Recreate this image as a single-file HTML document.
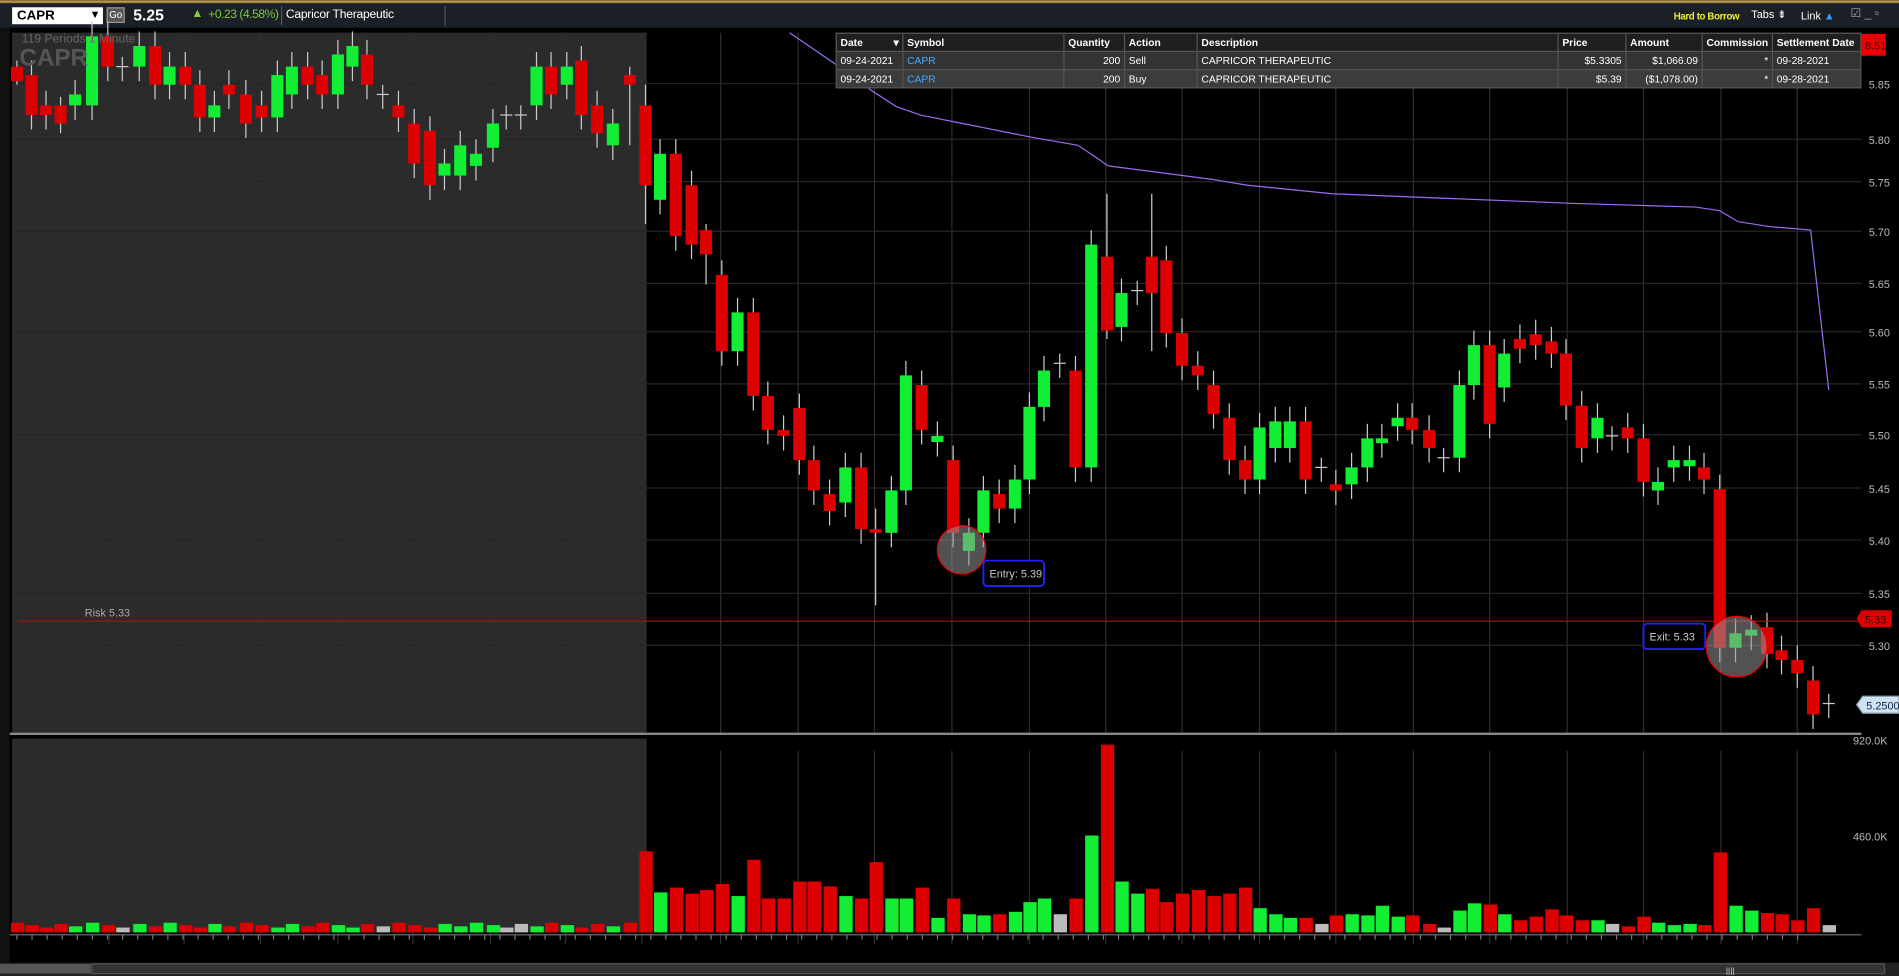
<!DOCTYPE html>
<html><head><meta charset="utf-8"><style>
html,body{margin:0;padding:0;background:#000;overflow:hidden;width:1899px;height:976px}
#w{position:absolute;left:0;top:0;width:1568px;height:806px;transform:scale(1.2111,1.2109);transform-origin:0 0;font-family:"Liberation Sans",sans-serif;color:#ddd}
.t{position:absolute;white-space:nowrap}
table{border-collapse:collapse;font-size:8.5px;color:#fff}
td{border:1px solid #555;padding:0 3px;height:14px}
</style></head><body><div id="w">
<div style="position:absolute;left:0;top:0;width:1568px;height:3px;background:linear-gradient(#6b5a2a,#c9a95a,#4a3a1a)"></div>
<div style="position:absolute;left:0;top:3px;width:1568px;height:20px;background:#1b2027"></div>
<div style="position:absolute;left:10px;top:6px;width:75px;height:14px;background:#fff"></div>
<div class="t" style="left:14px;top:7px;font-size:11px;color:#000;font-weight:bold">CAPR</div>
<div class="t" style="left:74px;top:7px;font-size:9px;color:#000">▼</div>
<div style="position:absolute;left:88px;top:6px;width:15px;height:13px;background:#555;border:1px solid #999;box-sizing:border-box;font-size:8px;color:#fff;text-align:center;line-height:11px">Go</div>
<div class="t" style="left:110px;top:5px;font-size:13px;color:#fff;font-weight:bold">5.25</div>
<div class="t" style="left:158px;top:6px;font-size:10px;color:#8c4">▲</div>
<div class="t" style="left:172px;top:7px;font-size:10px;color:#7c3;letter-spacing:-0.4px">+0.23 (4.58%)</div>
<div style="position:absolute;left:232px;top:5px;width:1px;height:16px;background:#555"></div>
<div class="t" style="left:236px;top:7px;font-size:10px;color:#fff;letter-spacing:-0.2px">Capricor Therapeutic</div>
<div style="position:absolute;left:367px;top:5px;width:1px;height:16px;background:#555"></div>
<div class="t" style="left:1382px;top:9px;font-size:8px;color:#ee3;font-weight:bold;letter-spacing:-0.3px">Hard to Borrow</div>
<div class="t" style="left:1446px;top:7px;font-size:9px;color:#fff">Tabs ⇟</div>
<div class="t" style="left:1487px;top:8px;font-size:9px;color:#fff">Link <span style="color:#39f">▲</span></div>
<div class="t" style="left:1528px;top:6px;font-size:10px;color:#aaa">☑ _ ▫</div>
<svg id="c" width="1568" height="806" style="position:absolute;left:0;top:0"></svg>
<table style="position:absolute;left:690px;top:27px;width:847px;background:#333">
<tr style="background:#1f1f1f;font-weight:bold"><td style="width:48px">Date <span style="float:right">▾</span></td><td style="width:126px">Symbol</td><td style="width:43px">Quantity</td><td style="width:53px">Action</td><td style="width:291px">Description</td><td style="width:49px">Price</td><td style="width:56px">Amount</td><td style="width:51px">Commission</td><td>Settlement Date</td></tr>
<tr><td>09-24-2021</td><td style="color:#4af">CAPR</td><td style="text-align:right">200</td><td>Sell</td><td>CAPRICOR THERAPEUTIC</td><td style="text-align:right">$5.3305</td><td style="text-align:right">$1,066.09</td><td style="text-align:right">*</td><td>09-28-2021</td></tr>
<tr style="background:#3c3c3c"><td>09-24-2021</td><td style="color:#4af">CAPR</td><td style="text-align:right">200</td><td>Buy</td><td>CAPRICOR THERAPEUTIC</td><td style="text-align:right">$5.39</td><td style="text-align:right">($1,078.00)</td><td style="text-align:right">*</td><td>09-28-2021</td></tr>
</table>
</div>
<script>
var s='';
function R(x,y,w,h,f,o){s+='<rect x="'+x+'" y="'+y+'" width="'+w+'" height="'+h+'" fill="'+f+'"'+(o||'')+'/>';}
function L(x1,y1,x2,y2,c,w){s+='<line x1="'+x1+'" y1="'+y1+'" x2="'+x2+'" y2="'+y2+'" stroke="'+c+'" stroke-width="'+(w||1)+'"/>';}
function T(x,y,t,c,fs,a){s+='<text x="'+x+'" y="'+y+'" fill="'+c+'" font-size="'+(fs||9)+'" font-family="Liberation Sans,sans-serif"'+(a||'')+'>'+t+'</text>';}
R(0,23,8,783,'#111');R(8,23,1560,783,'#000');
R(10,27,524,579,'#2b2b2b');R(10,610,524,160,'#2b2b2b');
var gx=[90,152,215,279,341,405,467,530,595,659,722,786,850,913,976,1040,1103,1167,1230,1294,1357,1421,1484];
gx.forEach(function(x){L(x,27,x,606,'#2e2e2e');L(x,620,x,780,'#2e2e2e');});
var pl=[['5.85',72],['5.80',118],['5.75',153],['5.70',194],['5.65',237],['5.60',277],['5.55',320],['5.50',362],['5.45',406],['5.40',449],['5.35',493],['5.30',536]];
pl.forEach(function(p){L(10,p[1]-3,1537,p[1]-3,'#262626');T(1543,p[1]+1,p[0],'#bbb',9);});
L(8,606,1537,606,'#888',2);L(8,772,1537,772,'#777');
for(var i=0;i<119;i++){L(14+i*12.46,772,14+i*12.46,776,'#777');}
s+='<polyline fill="none" stroke="#9a6cf0" stroke-width="1" points="652,27 700,60 720,75 740,88 760,95 800,103 850,113 890,120 905,130 915,137 1000,148 1030,153 1100,160 1200,164 1300,168 1400,171 1420,174 1435,183 1460,187 1495,190 1510,322"/>';
var C=[[14,'r',55,67,50,70],[26,'r',62,95],[38,'r',87,95],[50,'r',87,102,80,110],[62,'g',78,87],[76,'g',30,87],[89,'r',30,55],[101,'d',55],[115,'g',38,55],[128,'r',38,70],[140,'g',55,70],[153,'r',55,70],[165,'r',70,97],[177,'g',87,97],[189,'r',70,78],[203,'r',78,102],[216,'r',87,97],[229,'g',62,97],[241,'g',55,78],[254,'r',55,70],[266,'r',62,78],[279,'g',45,78],[291,'g',38,55],[303,'r',45,70],[316,'d',78],[329,'r',87,97],[342,'r',102,135],[355,'r',108,153],[367,'g',135,145],[380,'g',120,145],[393,'g',127,137],[407,'g',102,122],[418,'d',95],[430,'d',95],[443,'g',55,87],[455,'r',55,78],[468,'g',55,70],[480,'r',50,95],[493,'r',87,110],[506,'g',102,120],[520,'r',62,70,55,120],
[533,'r',87,153,70,185],[545,'g',127,165],[558,'r',127,195],[571,'r',153,202],[583,'r',190,210,185,235],[596,'r',227,290],[609,'g',258,290],[622,'r',258,327],[634,'r',327,355],[647,'r',355,360],[660,'r',337,380],[672,'r',380,405],[685,'r',408,422],[698,'g',386,415],[711,'r',386,437],[723,'r',437,440,420,500],[736,'g',405,440],[748,'g',310,405],[761,'r',318,355],[774,'g',360,365],[787,'r',380,440],[800,'g',440,455],[812,'g',405,440],[825,'r',408,420],[838,'g',396,420],[850,'g',336,396],[862,'g',306,336],[875,'d',300],[888,'r',306,386],[901,'g',202,386],[914,'r',212,273,160,280],[926,'g',242,270],[939,'d',240],[951,'r',212,242,160,290],[963,'r',215,275],[976,'r',275,302],[989,'r',302,310],[1002,'r',318,342],[1015,'r',345,380],[1028,'r',380,396],[1040,'g',353,396],[1053,'g',348,370],[1065,'g',348,370],[1078,'r',348,396],[1091,'d',386],[1103,'r',400,405],[1116,'g',386,400],[1129,'g',362,386],[1141,'g',362,366],[1154,'g',345,352],[1166,'r',345,355],[1180,'r',355,370],[1192,'d',378],[1205,'g',318,378],[1217,'g',285,318],[1230,'r',285,350],[1242,'g',292,320],[1255,'r',280,288],[1268,'r',276,285],[1281,'r',282,292],[1293,'r',292,335],[1306,'r',335,370],[1319,'g',345,362],[1331,'d',360],[1344,'r',353,362],[1357,'r',362,398],[1369,'g',398,405],[1382,'g',380,386],[1395,'g',380,385],[1407,'r',386,396],[1420,'r',404,535],[1433,'g',523,535],[1446,'g',520,525],[1459,'r',518,540],[1471,'r',537,545],[1484,'r',545,556],[1497,'r',562,590],[1510,'d',581]];
C.forEach(function(c){var x=c[0];
 if(c[1]=='d'){L(x,c[2]-8,x,c[2]+12,'#ccc');L(x-5,c[2],x+5,c[2],'#ccc');return;}
 var t=c[2],b=c[3],wt=c[4]||t-12,wb=c[5]||b+12;
 L(x,wt,x,wb,'#ccc');R(x-5,t,10,Math.max(b-t,3),c[1]=='g'?'#11ee33':'#dd0000');});
var V={533:703,545:737,558:733,571:738,583:735,596:730,609:740,622:710,634:742,647:742,660:728,672:728,685:732,698:740,711:742,723:712,736:742,748:742,761:733,774:758,787:742,800:755,812:756,825:755,838:753,850:745,862:742,875:755,888:742,901:690,914:615,926:728,939:738,951:734,963:745,976:738,989:735,1002:740,1015:738,1028:733,1040:750,1053:755,1065:758,1078:758,1091:763,1103:756,1116:755,1129:756,1141:748,1154:757,1166:756,1180:763,1192:766,1205:752,1217:746,1230:747,1242:755,1255:760,1268:757,1281:751,1293:756,1306:760,1319:760,1331:763,1344:765,1357:757,1369:762,1382:764,1395:763,1407:764,1420:704,1433:748,1446:752,1459:754,1471:755,1484:760,1497:750,1510:764};
C.forEach(function(c,i){var x=c[0],y=V[x]||(762+(i*7%5));var col=c[1]=='g'?'#11ee33':c[1]=='r'?'#dd0000':'#bbb';if(x==939)col='#11ee33';if(x==875||x==1192||x==1331||x==1510)col='#bbb';R(x-5,y,11,770-y,col);});
T(1530,615,'920.0K','#bbb',9);T(1530,694,'460.0K','#bbb',9);
L(15,513,1537,513,'#b01010');T(70,509,'Risk 5.33','#aaa',9);
s+='<polygon points="1533,511 1537,504 1562,504 1562,518 1537,518" fill="#dd0000"/>';T(1540,515,'5.33','#300',9);
s+='<polygon points="1533,582 1538,575 1568,575 1568,589 1538,589" fill="#cfe3f5" stroke="#89a"/>';T(1541,586,'5.2500','#124',9);
R(1537,28,20,18,'#ee0000');T(1540,41,'8.51','#300',9);
s+='<circle cx="794" cy="454" r="20" fill="rgba(150,150,150,0.55)" stroke="#e00"/>';
s+='<rect x="812" y="463" width="50" height="21" rx="3" fill="#000" stroke="#2222ff" stroke-width="1.5"/>';T(817,477,'Entry: 5.39','#ccc',9);
s+='<circle cx="1434" cy="534" r="25" fill="rgba(150,150,150,0.55)" stroke="#e00"/>';
s+='<rect x="1357" y="515" width="51" height="21" rx="3" fill="#000" stroke="#2222ff" stroke-width="1.5"/>';T(1362,529,'Exit: 5.33','#ccc',9);
T(18,35,'119 Periods 1 Minute','#666',10);T(16,54,'CAPR','#555',20,' font-weight="bold"');
R(0,795,1568,11,'#222');R(0,796,75,8,'#555');R(76,796,1480,8,'#333',' stroke="#555"');T(1425,804,'||||','#ccc',7);
document.getElementById('c').innerHTML=s;
</script></body></html>
